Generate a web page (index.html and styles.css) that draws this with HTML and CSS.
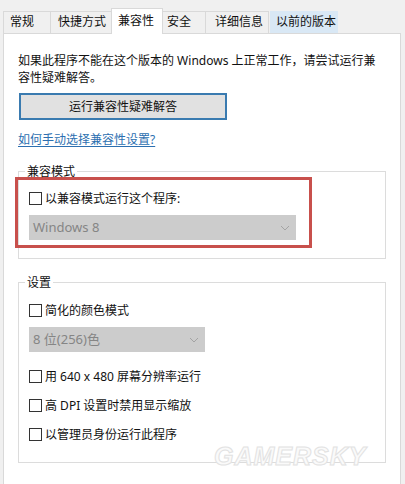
FILE: index.html
```html
<!DOCTYPE html>
<html lang="zh-CN">
<head>
<meta charset="utf-8">
<title>属性 - 兼容性</title>
<link rel="stylesheet" href="styles.css">
</head>
<body>
<div class="window">
  <div class="tabs">
    <div class="tab tab-general">常规</div>
    <div class="tab tab-shortcut">快捷方式</div>
    <div class="tab tab-compat is-active">兼容性</div>
    <div class="tab tab-security">安全</div>
    <div class="tab tab-details">详细信息</div>
    <div class="tab tab-previous is-hover">以前的版本</div>
  </div>
  <div class="panel">
    <p class="intro">如果此程序不能在这个版本的 Windows 上正常工作，请尝试运行兼<br>容性疑难解答。</p>
    <div class="btn">运行兼容性疑难解答</div>
    <a class="link" href="#">如何手动选择兼容性设置?</a>

    <div class="group group-mode">
      <div class="group-title">兼容模式</div>
      <div class="highlight">
        <div class="check-row"><span class="checkbox"></span><span>以兼容模式运行这个程序:</span></div>
        <div class="select select-wide">
          <span>Windows 8</span>
          <svg class="chev" width="10" height="6" viewBox="0 0 10 6"><polyline points="1,1 5,5 9,1" fill="none" stroke="#a3a3a3" stroke-width="1"/></svg>
        </div>
      </div>
    </div>

    <div class="group group-settings">
      <div class="group-title">设置</div>
      <div class="check-row first"><span class="checkbox"></span><span>简化的颜色模式</span></div>
      <div class="select select-narrow">
        <span>8 位(256)色</span>
        <svg class="chev" width="10" height="6" viewBox="0 0 10 6"><polyline points="1,1 5,5 9,1" fill="none" stroke="#a3a3a3" stroke-width="1"/></svg>
      </div>
      <div class="check-row after-select"><span class="checkbox"></span><span>用 640 x 480 屏幕分辨率运行</span></div>
      <div class="check-row spaced"><span class="checkbox"></span><span>高 DPI 设置时禁用显示缩放</span></div>
      <div class="check-row spaced"><span class="checkbox"></span><span>以管理员身份运行此程序</span></div>
    </div>
  </div>
  <div class="watermark">GAMERSKY</div>
</div>
</body>
</html>
```

FILE: styles.css
```css
* { box-sizing: border-box; }

html, body {
  margin: 0;
  padding: 0;
  background: #f0f0f0;
}

body {
  width: 405px;
  height: 484px;
  overflow: hidden;
  font-family: "Noto Sans", "Noto Sans CJK SC", "Microsoft YaHei", sans-serif;
  font-size: 12px;
  line-height: 17px;
  color: #111;
}

.window {
  position: relative;
  padding: 8px 4px 0 3px;
}

.tabs {
  display: flex;
  align-items: flex-end;
  height: 25px;
}

.tab {
  height: 22px;
  border: 1px solid #d9d9d9;
  border-bottom: none;
  margin-left: -1px;
  background: #f0f0f0;
  line-height: 20px;
  white-space: nowrap;
}

.tab:first-child { margin-left: 0; }

.tab-general  { width: 48px; padding-left: 6px; }
.tab-shortcut { width: 62px; padding-left: 7px; }
.tab-compat   { width: 52px; padding-left: 6px; }
.tab-security { width: 44px; padding-left: 4px; }
.tab-details  { width: 64px; padding-left: 9px; }
.tab-previous { width: 68px; padding-left: 5px; margin-left: 1px; }

.tab.is-active {
  position: relative;
  z-index: 1;
  height: 26px;
  margin-bottom: -1px;
  background: #fff;
  line-height: 24px;
}

.tab.is-hover {
  background: #d9e8f5;
  border-color: #d9e8f5;
}

.panel {
  height: 470px;
  background: #fff;
  border: 1px solid #d9d9d9;
  padding: 18px 14px 0 14px;
}

.intro {
  margin: 0;
  white-space: nowrap;
}

.btn {
  width: 208px;
  height: 27px;
  margin: 7px 0 0 1px;
  border: 2px solid #3a7bb0;
  background: #e1e1e1;
  text-align: center;
  line-height: 23px;
}

.link {
  display: table;
  margin-top: 11px;
  color: #2c6fb0;
  text-decoration: underline;
  text-underline-offset: 2px;
}

.group {
  border: 1px solid #dcdcdc;
}

.group-mode {
  margin-top: 23px;
  padding-bottom: 10px;
}

.group-settings {
  margin-top: 23px;
  padding: 0 0 19px 10px;
}

.group-title {
  display: table;
  margin: -9px 0 0 6px;
  padding: 0 2px;
  background: #fff;
}

.group-settings .group-title { margin-left: -4px; }

.highlight {
  width: 297px;
  height: 71px;
  margin: -3px 0 0 -4px;
  border: 3px solid #c8504c;
  padding: 10px 0 0 11px;
}

.check-row {
  display: flex;
  align-items: center;
  gap: 3px;
  height: 17px;
}

.checkbox {
  flex: none;
  width: 13px;
  height: 13px;
  border: 1px solid #333;
  background: #fff;
}

.check-row.first { margin-top: 11px; }
.check-row.after-select { margin-top: 16px; }
.check-row.spaced { margin-top: 12px; }

.select {
  display: flex;
  align-items: center;
  justify-content: space-between;
  height: 25px;
  margin-top: 8px;
  padding: 0 6px 0 4px;
  background: #cccccc;
  color: #858585;
  font-size: 13px;
}

.select-wide { width: 267px; }
.select-narrow { width: 176px; }

.chev { display: block; }

.watermark {
  position: absolute;
  left: 214px;
  top: 448px;
  font-family: "Liberation Sans", Arial, sans-serif;
  font-weight: bold;
  font-style: italic;
  font-size: 25px;
  letter-spacing: 1px;
  color: #fafafa;
  -webkit-text-stroke: 1px #e2e2e2;
}
```
